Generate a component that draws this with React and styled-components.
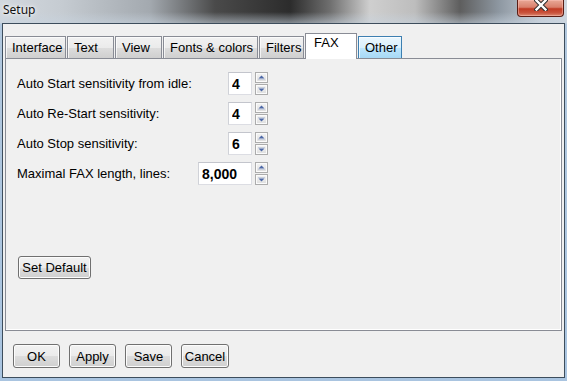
import React from 'react';
import styled, { createGlobalStyle } from 'styled-components';

const Global = createGlobalStyle`
  html, body { margin: 0; padding: 0; }
  body { background: #c9d3dc; }
`;

const Window = styled.div`
  width: 567px;
  height: 381px;
  display: flex;
  flex-direction: column;
  overflow: hidden;
  background:
    linear-gradient(to bottom, rgba(205,214,224,0) 0px, rgba(205,214,224,0) 12px, rgba(200,212,224,0.55) 23px, #b2c8de 24px, #a9c4e0 381px),
    linear-gradient(to right, #d2d8de 0px, #c6ccd2 60px, #a3a9af 150px, #4a4a4a 215px, #2c2c2c 290px, #6f6f6f 330px, #cfcfcf 370px, #bdbdbd 415px, #5e5e5e 460px, #8f99a3 500px, #c4ccd5 540px, #cfd7df 567px);
`;

const TitleBar = styled.div`
  height: 23px;
  display: flex;
  align-items: flex-start;
  justify-content: space-between;
`;

const Title = styled.span`
  font-family: "Noto Sans", "Open Sans", sans-serif;
  font-size: 12px;
  line-height: 20px;
  color: #111;
  margin-left: 3px;
  text-shadow: 0 0 6px rgba(255,255,255,0.9), 0 0 3px rgba(255,255,255,0.9);
`;

const CloseButton = styled.div`
  width: 45px;
  height: 16px;
  margin-right: 3px;
  border: 1px solid #5a1d14;
  border-top: none;
  border-radius: 0 0 4px 4px;
  box-shadow: inset 0 0 0 1px rgba(255,200,190,0.45);
  background: linear-gradient(#e9a897 0%, #d9806c 45%, #c13b24 55%, #c9533c 80%, #dc8a72 100%);
  display: flex;
  align-items: flex-start;
  justify-content: center;
`;

const Client = styled.div`
  flex: 1;
  margin: 0 2px 3px 2px;
  border: 1px solid #3d4d5c;
  background: #f0f0f0;
  display: flex;
  flex-direction: column;
  padding-top: 9px;
  font-family: "Liberation Sans", Arial, sans-serif;
  font-size: 13px;
  color: #000;
`;

const TabStrip = styled.div`
  height: 25px;
  display: flex;
  align-items: flex-end;
  gap: 1px;
  padding-left: 2px;
`;

const Tab = styled.div`
  box-sizing: border-box;
  width: ${p => p.$w}px;
  height: ${p => (p.$active ? 26 : 22)}px;
  margin-bottom: ${p => (p.$active ? -1 : 0)}px;
  position: ${p => (p.$active ? 'relative' : 'static')};
  z-index: ${p => (p.$active ? 1 : 0)};
  padding-left: ${p => (p.$active ? 8 : 6)}px;
  line-height: ${p => (p.$active ? 18 : 21)}px;
  border: 1px solid ${p => (p.$hover ? '#3c7fb1' : '#898c95')};
  border-bottom: none;
  white-space: nowrap;
  background: ${p =>
    p.$active
      ? '#ffffff'
      : p.$hover
      ? 'linear-gradient(#eaf6fd 0%, #d9f0fc 50%, #bee6fd 51%, #a7d9f5 100%)'
      : 'linear-gradient(#f2f2f2 0%, #ebebeb 50%, #dddddd 51%, #cfcfcf 100%)'};
  box-shadow: ${p => (p.$active ? 'none' : 'inset 1px 1px 0 rgba(255,255,255,0.7)')};
`;

const Panel = styled.div`
  flex: 1;
  margin: 0 2px 0 2px;
  border: 1px solid #898c95;
  box-shadow: inset -1px -1px 0 #ffffff;
  padding: 13px 0 0 11px;
  display: flex;
  flex-direction: column;
`;

const Rows = styled.div`
  display: flex;
  flex-direction: column;
  gap: 7px;
  width: 251px;
`;

const Row = styled.div`
  display: flex;
  align-items: center;
  height: 23px;
`;

const Label = styled.span`
  flex: 1;
  white-space: nowrap;
`;

const NumberBox = styled.input`
  box-sizing: border-box;
  width: ${p => p.$w}px;
  height: 23px;
  margin: 0;
  padding: 0 0 0 3px;
  border: 1px solid #dcdde3;
  border-top-color: #c3c5cc;
  border-left-color: #d0d2d8;
  background: #fff;
  font-family: "Liberation Sans", Arial, sans-serif;
  font-weight: bold;
  font-size: 14px;
  color: #000;
  outline: none;
`;

const Spinner = styled.div`
  display: flex;
  flex-direction: column;
  gap: 1px;
  margin-left: 3px;
`;

const SpinHalf = styled.div`
  box-sizing: border-box;
  width: 13px;
  height: 11px;
  border: 1px solid #acacac;
  box-shadow: inset 0 0 0 1px #fbfbfb;
  background: linear-gradient(#f4f4f4, #dedede);
  display: flex;
  align-items: center;
  justify-content: center;
`;

const Button = styled.div`
  box-sizing: border-box;
  width: ${p => p.$w}px;
  height: ${p => p.$h || 24}px;
  border: 1px solid #707070;
  border-radius: 3px;
  box-shadow: inset 0 0 0 1px #fcfcfc;
  background: linear-gradient(#f2f2f2 0%, #ebebeb 50%, #dddddd 51%, #cfcfcf 100%);
  display: flex;
  align-items: center;
  justify-content: center;
  white-space: nowrap;
`;

const DefaultButton = styled(Button)`
  margin: 71px 0 0 1px;
`;

const Footer = styled.div`
  height: 46px;
  box-sizing: border-box;
  padding: 13px 0 0 10px;
  display: flex;
  align-items: flex-start;
  gap: 9px;
`;

const Arrow = ({ up }) => (
  <svg width="7" height="5" viewBox="0 0 7 5">
    {up ? (
      <>
        <path d="M3.5 0.5 L6.5 3.5 L0.5 3.5 Z" fill="#4c68a8" />
        <rect x="0" y="4" width="7" height="1" fill="#c9cfdc" />
      </>
    ) : (
      <>
        <rect x="0" y="0" width="7" height="1" fill="#c9cfdc" />
        <path d="M0.5 1.5 L6.5 1.5 L3.5 4.5 Z" fill="#4c68a8" />
      </>
    )}
  </svg>
);

const Field = ({ label, value, width }) => (
  <Row>
    <Label>{label}</Label>
    <NumberBox $w={width} defaultValue={value} readOnly />
    <Spinner>
      <SpinHalf><Arrow up /></SpinHalf>
      <SpinHalf><Arrow /></SpinHalf>
    </Spinner>
  </Row>
);

const tabs = [
  { name: 'Interface', w: 61 },
  { name: 'Text', w: 47 },
  { name: 'View', w: 47 },
  { name: 'Fonts & colors', w: 95 },
  { name: 'Filters', w: 45 },
  { name: 'FAX', w: 52, active: true },
  { name: 'Other', w: 44, hover: true },
];

const fields = [
  { label: 'Auto Start sensitivity from idle:', value: '4', width: 24 },
  { label: 'Auto Re-Start sensitivity:', value: '4', width: 24 },
  { label: 'Auto Stop sensitivity:', value: '6', width: 24 },
  { label: 'Maximal FAX length, lines:', value: '8,000', width: 54 },
];

export default function App() {
  return (
    <>
      <Global />
      <Window>
        <TitleBar>
          <Title>Setup</Title>
          <CloseButton>
            <svg width="14" height="11" viewBox="0 0 14 11">
              <path d="M2.5 0.5 L11.5 9.5 M11.5 0.5 L2.5 9.5" stroke="#2e2e2e" strokeWidth="4.4" strokeLinecap="square" />
              <path d="M2.5 0.5 L11.5 9.5 M11.5 0.5 L2.5 9.5" stroke="#ffffff" strokeWidth="2.4" strokeLinecap="square" />
            </svg>
          </CloseButton>
        </TitleBar>
        <Client>
          <TabStrip>
            {tabs.map(t => (
              <Tab key={t.name} $w={t.w} $active={t.active} $hover={t.hover}>
                {t.name}
              </Tab>
            ))}
          </TabStrip>
          <Panel>
            <Rows>
              {fields.map(f => (
                <Field key={f.label} {...f} />
              ))}
            </Rows>
            <DefaultButton $w={73} $h={23}>Set Default</DefaultButton>
          </Panel>
          <Footer>
            <Button $w={47}>OK</Button>
            <Button $w={47}>Apply</Button>
            <Button $w={47}>Save</Button>
            <Button $w={48}>Cancel</Button>
          </Footer>
        </Client>
      </Window>
    </>
  );
}
